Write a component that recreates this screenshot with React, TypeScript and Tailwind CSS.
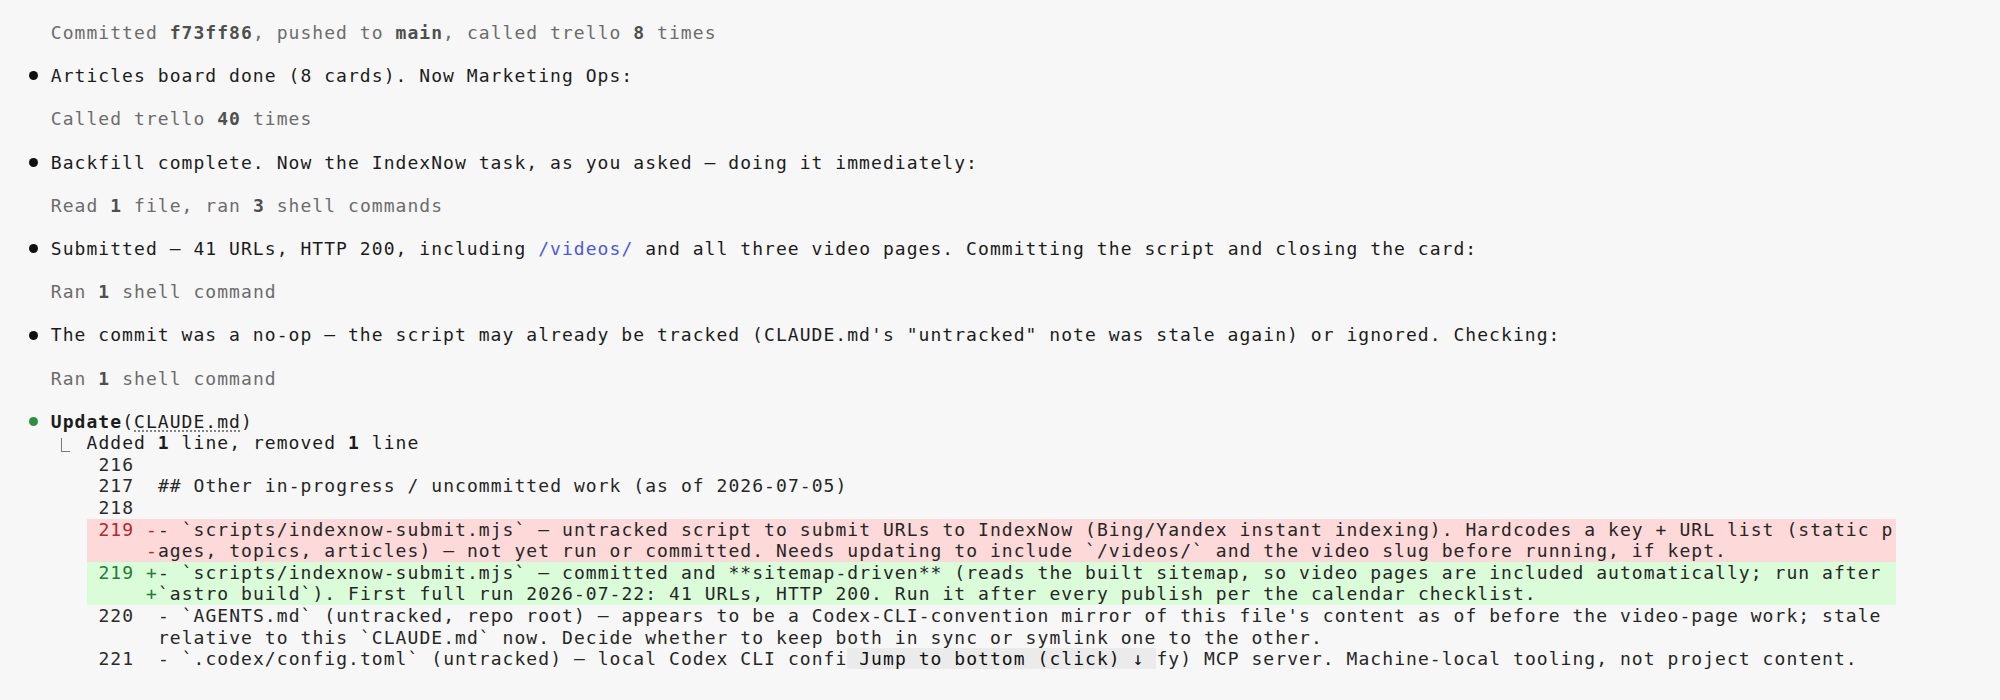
import React from 'react'

function Line({ children, className = '' }: { children?: React.ReactNode; className?: string }) {
  return <div className={`h-[21.6px] leading-[21.6px] whitespace-pre ${className}`}>{children}</div>
}

function B({ children }: { children: React.ReactNode }) {
  return <span className="font-bold text-[#4f4f4f]">{children}</span>
}

function Dot({ green = false }: { green?: boolean }) {
  return (
    <span className="w-[23.8px] shrink-0 flex items-center">
      <span className={`ml-[2px] w-[9px] h-[9px] rounded-full ${green ? 'bg-[#2f8f3f]' : 'bg-[#111]'}`} />
    </span>
  )
}

function Bullet({ children, green = false }: { children: React.ReactNode; green?: boolean }) {
  return (
    <div className="flex h-[21.6px] leading-[21.6px] whitespace-pre">
      <Dot green={green} />
      <span>{children}</span>
    </div>
  )
}

function Gray({ children }: { children: React.ReactNode }) {
  return <Line className="pl-[23.8px] text-[#6c6c6c]">{children}</Line>
}

type Kind = 'ctx' | 'del' | 'add'

function Hunk({ num, kind = 'ctx', lines }: { num: string; kind?: Kind; lines: React.ReactNode[] }) {
  const bg = kind === 'del' ? 'bg-[#fdd9d9]' : kind === 'add' ? 'bg-[#dafcd9]' : ''
  const sign = kind === 'del' ? '-' : kind === 'add' ? '+' : ' '
  const numColor = kind === 'del' ? 'text-[#b3262d]' : kind === 'add' ? 'text-[#247a36]' : 'text-[#2a2a2a]'
  return (
    <div className={bg}>
      {lines.map((l, i) => (
        <div key={i} className="flex h-[21.6px] leading-[21.6px] whitespace-pre pl-[11.9px]">
          <span className={`w-[47.6px] shrink-0 ${numColor}`}>{i === 0 ? num : ''}</span>
          <span className={`w-[11.9px] shrink-0 ${numColor}`}>{sign}</span>
          <span className="text-[#262626]">{l}</span>
        </div>
      ))}
    </div>
  )
}

export default function App() {
  return (
    <div className="min-h-screen bg-[#f7f7f7] pl-[27px] pt-[22px] font-['DejaVu_Sans_Mono',monospace] text-[18px] tracking-[1.05px] text-[#1c1c1c]">
      <Gray>
        Committed <B>f73ff86</B>, pushed to <B>main</B>, called trello <B>8</B> times
      </Gray>
      <Line />
      <Bullet>Articles board done (8 cards). Now Marketing Ops:</Bullet>
      <Line />
      <Gray>
        Called trello <B>40</B> times
      </Gray>
      <Line />
      <Bullet>Backfill complete. Now the IndexNow task, as you asked — doing it immediately:</Bullet>
      <Line />
      <Gray>
        Read <B>1</B> file, ran <B>3</B> shell commands
      </Gray>
      <Line />
      <Bullet>
        Submitted — 41 URLs, HTTP 200, including <span className="text-[#4d5ad6]">/videos/</span> and all three video
        pages. Committing the script and closing the card:
      </Bullet>
      <Line />
      <Gray>
        Ran <B>1</B> shell command
      </Gray>
      <Line />
      <Bullet>
        The commit was a no-op — the script may already be tracked (CLAUDE.md's "untracked" note was stale again) or
        ignored. Checking:
      </Bullet>
      <Line />
      <Gray>
        Ran <B>1</B> shell command
      </Gray>
      <Line />
      <Bullet green>
        <span className="font-bold">Update</span>(
        <span className="underline decoration-dotted decoration-[#777] underline-offset-[3px]">CLAUDE.md</span>)
      </Bullet>
      <div className="flex h-[21.6px] leading-[21.6px] whitespace-pre">
        <span className="w-[59.5px] shrink-0 flex items-center">
          <span className="ml-[34px] mt-[3px] w-[9px] h-[14px] border-l border-b border-[#777]" />
        </span>
        <span>
          Added <span className="font-bold">1</span> line, removed <span className="font-bold">1</span> line
        </span>
      </div>
      <div className="ml-[59.5px] w-[1809px]">
        <Hunk num="216" lines={['']} />
        <Hunk num="217" lines={['## Other in-progress / uncommitted work (as of 2026-07-05)']} />
        <Hunk num="218" lines={['']} />
        <Hunk
          num="219"
          kind="del"
          lines={[
            '- `scripts/indexnow-submit.mjs` — untracked script to submit URLs to IndexNow (Bing/Yandex instant indexing). Hardcodes a key + URL list (static p',
            'ages, topics, articles) — not yet run or committed. Needs updating to include `/videos/` and the video slug before running, if kept.',
          ]}
        />
        <Hunk
          num="219"
          kind="add"
          lines={[
            '- `scripts/indexnow-submit.mjs` — committed and **sitemap-driven** (reads the built sitemap, so video pages are included automatically; run after',
            '`astro build`). First full run 2026-07-22: 41 URLs, HTTP 200. Run it after every publish per the calendar checklist.',
          ]}
        />
        <Hunk
          num="220"
          lines={[
            "- `AGENTS.md` (untracked, repo root) — appears to be a Codex-CLI-convention mirror of this file's content as of before the video-page work; stale",
            'relative to this `CLAUDE.md` now. Decide whether to keep both in sync or symlink one to the other.',
          ]}
        />
        <Hunk
          num="221"
          lines={[
            <>
              {'- `.codex/config.toml` (untracked) — local Codex CLI confi'}
              <span className="bg-[#ebebeb] text-[#111]">{' Jump to bottom (click) ↓ '}</span>
              {'fy) MCP server. Machine-local tooling, not project content.'}
            </>,
          ]}
        />
      </div>
    </div>
  )
}
